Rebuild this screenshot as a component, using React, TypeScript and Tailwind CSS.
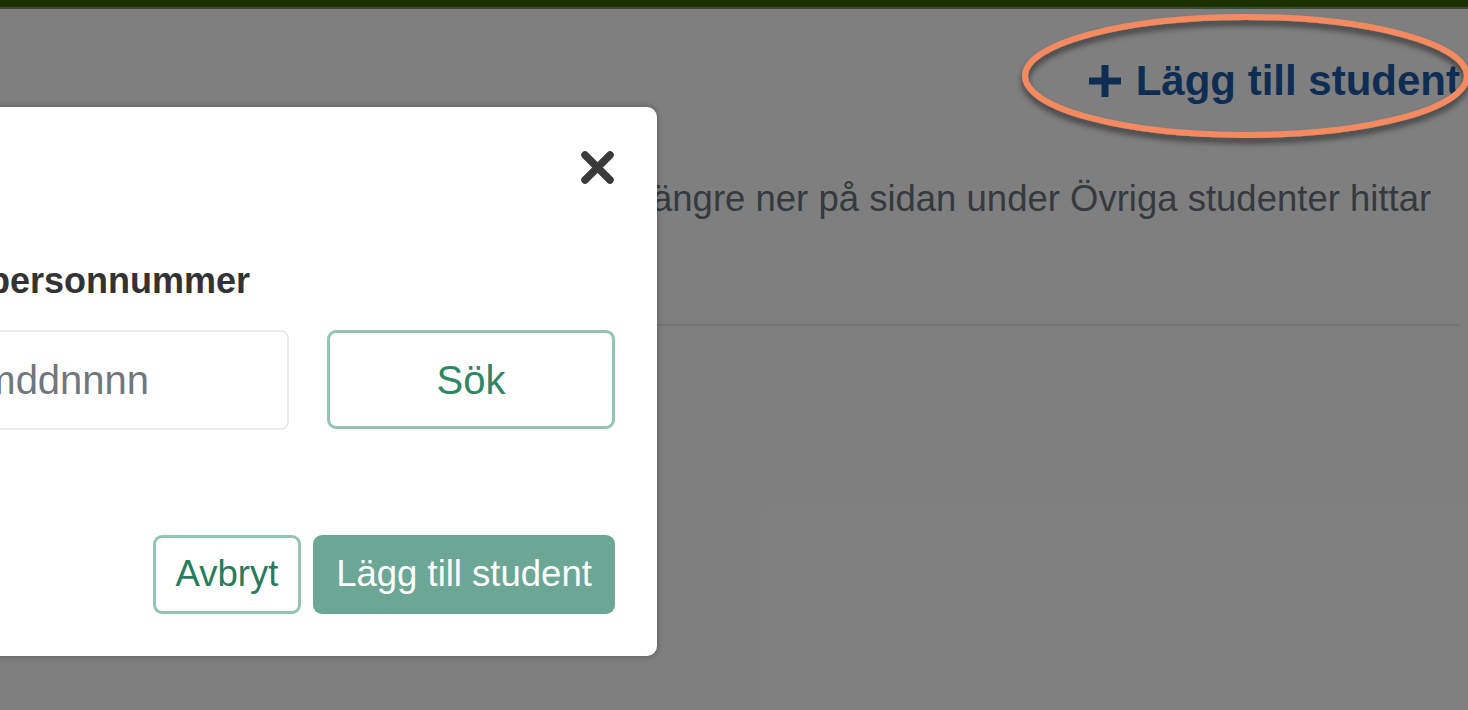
import React from "react";

function PlusIcon() {
  return (
    <svg width="36" height="36" viewBox="0 0 36 36" aria-hidden="true">
      <path d="M18 2v32M2 18h32" stroke="currentColor" strokeWidth="7" />
    </svg>
  );
}

function CloseIcon() {
  return (
    <svg width="35" height="35" viewBox="0 0 35 35" aria-hidden="true">
      <path d="M5 5L30 30M30 5L5 30" stroke="currentColor" strokeWidth="7.5" strokeLinecap="round" />
    </svg>
  );
}

export default function App() {
  return (
    <div className="relative h-[710px] w-[1468px] overflow-hidden bg-white font-['Liberation_Sans',Arial,sans-serif]">
      {/* sidhuvud */}
      <div className="h-[7px] bg-[#346600]" />
      <div className="h-[2px] bg-[#7a9468]" />

      <main className="pl-[163px] pr-[8px]">
        <div className="flex justify-end pt-[51px]">
          <button className="flex items-center gap-[13px] text-[42px] font-bold leading-none text-[#1f5aa6]">
            <PlusIcon />
            Lägg till student
          </button>
        </div>
        <p className="mt-[75px] whitespace-nowrap text-[36.5px] leading-[44px] text-[#6c757d]">
          Välj studenter i listan nedan. Längre ner på sidan under Övriga studenter hittar
        </p>
        <hr className="mt-[103px] border-t-2 border-[#eaeaea]" />
      </main>

      {/* bakgrund bakom dialogen */}
      <div className="absolute inset-0 bg-black/50" />

      {/* markering runt knappen */}
      <svg className="absolute left-[1010px] top-0" width="470" height="160" viewBox="0 0 470 160" aria-hidden="true">
        <defs>
          <filter id="skugga" x="-10%" y="-20%" width="120%" height="150%">
            <feDropShadow dx="0" dy="5" stdDeviation="3" floodColor="#000" floodOpacity="0.55" />
          </filter>
        </defs>
        <ellipse cx="236" cy="76" rx="221" ry="59" fill="none" stroke="#f58a60" strokeWidth="6" filter="url(#skugga)" />
      </svg>

      {/* dialog */}
      <div
        role="dialog"
        className="absolute left-[-194px] top-[107px] flex w-[851px] flex-col rounded-[10px] bg-white px-[42px] pb-[42px] pt-[43px] shadow-[0_0_6px_rgba(0,0,0,0.3)]"
      >
        <div className="flex justify-end">
          <button className="h-[35px] w-[35px] text-[#3a3a3a]" aria-label="Stäng">
            <CloseIcon />
          </button>
        </div>
        <label className="mt-[75px] text-[36px] font-bold leading-[42px] text-[#333333]">
          Skriv in personnummer
        </label>
        <div className="mt-[28px] flex gap-[38px]">
          <input
            placeholder="ååååmmddnnnn"
            className="h-[100px] min-w-0 flex-1 rounded-[8px] border-2 border-[#e9ebee] px-[10px] text-[40px] outline-none placeholder:text-[#70777f]"
          />
          <button className="h-[99px] w-[288px] rounded-[9px] border-[3px] border-[#93c4b5] text-[40px] text-[#2d8766]">
            Sök
          </button>
        </div>
        <div className="mt-[105px] flex justify-end gap-[12px]">
          <button className="h-[79px] w-[148px] rounded-[9px] border-[3px] border-[#93c4b5] text-[36.5px] text-[#287c5e]">
            Avbryt
          </button>
          <button className="h-[79px] w-[302px] rounded-[9px] bg-[#6ca695] text-[36.5px] text-white">
            Lägg till student
          </button>
        </div>
      </div>
    </div>
  );
}
